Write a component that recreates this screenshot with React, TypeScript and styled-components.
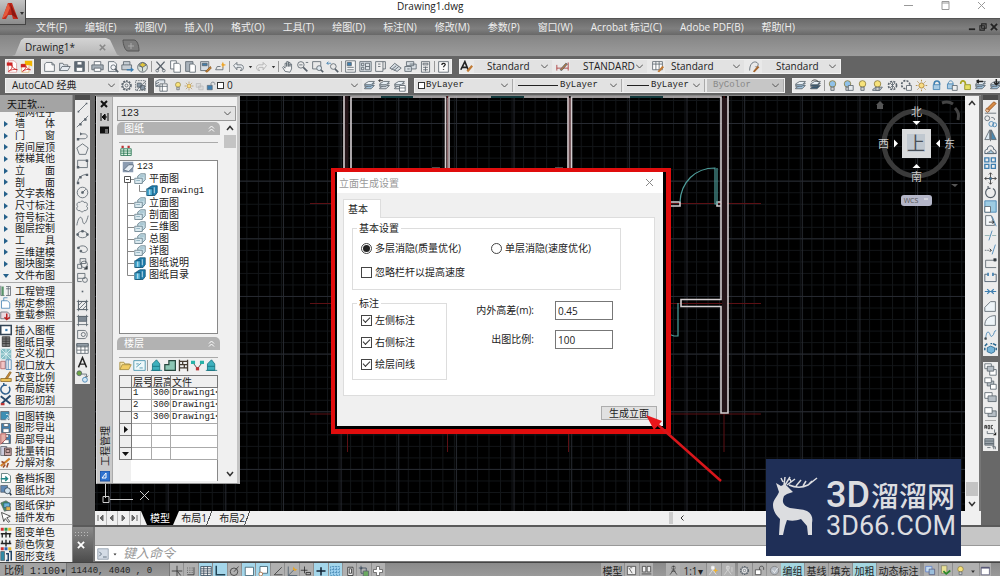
import React from 'react';
import styled, { createGlobalStyle, css } from 'styled-components';

const ui = '"Open Sans", "Noto Sans CJK SC", sans-serif';
const mono = '"Liberation Mono", "Noto Sans CJK SC", monospace';

const Global = createGlobalStyle`
  *, *::before, *::after { box-sizing: border-box; }
  body { margin: 0; background: #666; font: 10px/12px ${ui}; color: #222; overflow: hidden; }
  button, input, select { font: inherit; color: inherit; margin: 0; padding: 0; border: 0; border-radius: 0; background: none; }
  ul { list-style: none; margin: 0; padding: 0; }
`;

/* ---------- icons ---------- */
const B = '#3f7fb0';
const D = '#59626b';
const sheet = <path d="M3 2h7l3 3v9H3z" fill="#f4f6f8" />;
const layers = (c: string) => (
  <>
    <path d="M2 11l5-3h7l-4 4H2z" fill={c} />
    <path d="M2 8l5-3h7l-4 4H2z" fill={c} />
    <path d="M2 6l5-3h7l-4 4H2z" fill="#e8f0f6" />
  </>
);
const bulb = (c: string) => (
  <>
    <circle cx="8" cy="6" r="4" fill={c} stroke="#8a7a3a" />
    <path d="M6 10h4v4H6z" fill="#cfcfcf" />
  </>
);
const disk = <><path d="M2 2h11l1 1v11H2z" fill={B} /><path d="M5 2h6v4H5zM4 9h8v5H4z" fill="#fff" /></>;

const glyphs: Record<string, React.ReactNode> = {
  pdf: <><path d="M3 1h7l3 3v11H3z" fill="#fff" stroke="#d99" /><path d="M1 3h7v4H1z" fill="#c22" stroke="none" /><path d="M3 14c4-2 5-5 4-8 1 4 3 5 7 6-4-1-8 0-11 2z" stroke="#c22" /></>,
  pdf2: <><path d="M2 5h9v10H2z" fill="#fff" stroke="#e0b070" /><path d="M6 1l9 0 0 7-4-2-5 1z" fill="#f2b400" stroke="none" /><path d="M1 5h6v4H1z" fill="#c22" stroke="none" /><path d="M3 14c3-2 5-4 4-7 1 3 3 4 6 5-4-1-7 0-10 2z" stroke="#c22" /></>,
  new: <path d="M2 5l2-2h7l3 3v8H2zM11 3v3h3" fill="#f8f8f8" />,
  open: <path d="M2 13V4h4l1 2h5v2M2 13l3-5h10l-3 5z" fill="#e4eaf0" />,
  save: <><path d="M2 2h12v12H2z" fill="#5f6a75" /><path d="M5 2h6v4H5zM4 9h8v5H4z" fill="#fff" /></>,
  print: <><path d="M4 6V2h8v4" fill="#fff" /><path d="M1 6h14v6H1z" fill="#a7b0b8" /><path d="M4 10h8v4H4z" fill="#fff" /></>,
  preview: <>{sheet}<circle cx="9" cy="9" r="3" /><path d="M11 11l4 4" strokeWidth="2" /></>,
  plot: <><path d="M3 6V2h8v4M1 6h12v6H1z" fill="#c7ced4" /><path d="M7 11h5V9l4 3-4 3v-2H7z" fill={B} stroke="none" /></>,
  pubs: <><circle cx="8" cy="9" r="6" fill="#d9e2dc" /><path d="M8 3l5 3-5 3-4-3z" fill="#e0c63a" /><path d="M8 9v5M3 7l5 2" /></>,
  cut: <><path d="M3 2l9 10M13 2L4 12" strokeWidth="1.600" /><circle cx="4" cy="13" r="1.700" /><circle cx="12" cy="13" r="1.700" /></>,
  copy: <><path d="M2 1h7v10H2z" fill="#fff" /><path d="M6 4h6l2 2v9H6z" fill="#fff" /></>,
  paste: <><path d="M2 2h9v12H2z" fill="#aab3bb" /><path d="M7 5h5l2 2v8H7z" fill="#fff" /></>,
  match: <><path d="M2 2h10v11H2z" fill="#d6dde4" /><path d="M4 4h6v3H4z" fill={B} /><path d="M8 14l6-6 1 2-5 5z" fill="#c98435" stroke="#8d5a20" /></>,
  edit: <><path d="M2 12h9V8M2 12l2-4h4" /><path d="M9 6l2-4 1 3 3 1-3 1-1 3-1-3z" fill="#eda52a" stroke="none" /></>,
  undo: <path d="M2 7l4-4v3h5c4 0 4 7 0 7h-1c3-2 2-4 0-4H6v3z" fill="#eef1f4" />,
  redo: <path d="M14 7l-4-4v3H5c-4 0-4 7 0 7h1C3 11 4 9 6 9h4v3z" fill="#eee" stroke="#aaa" />,
  down: <path d="M5 7h6l-3 4z" fill="#333" stroke="none" />,
  pan: <path d="M5 14L2 9l1-1 2 2V4h2v4-6h2v6-5h2v5-3h2v6l-2 4z" fill="#f3f3f3" />,
  zoomrt: <><circle cx="6" cy="6" r="4" /><path d="M9 9l5 5" strokeWidth="2" /><path d="M4 6h4M12 3h3" /></>,
  zoomwin: <><path d="M2 2h10v9H2z" /><circle cx="10" cy="10" r="3" fill="#dfe8ef" /><path d="M12 12l3 3" strokeWidth="2" /></>,
  zoomprev: <><circle cx="9" cy="8" r="3.500" /><path d="M11 11l4 4" strokeWidth="2" /><path d="M1 4h5M1 4l2-2M1 4l2 2" stroke={B} /></>,
  props: <><path d="M2 1h12v14H2z" fill="#f6f6f6" /><path d="M4 3h5v4H4z" fill={B} /><path d="M4 9h8M4 12h8" /></>,
  center: <><path d="M1 2h14v12H1z" fill="#dde3e8" /><path d="M3 4h3v3H3zM3 9h3v3H3zM8 4h5v8H8zM8 8h5" /></>,
  palette: <><path d="M2 2h9v12H2z" fill="#eee" /><path d="M11 2h3v9h-3" /><path d="M5 5h3M5 8h3" /></>,
  sheetset: <path d="M1 10l6-6 8 6-5 4zM3 12l6-5M6 13l6-5" fill="#d4dbe1" />,
  markup: <path d="M3 2h9v5H3zM1 8h8v6H1zM7 5h8v6H9M4 11h3" fill="#d9dfe4" />,
  calc: <><path d="M3 2h10v13H3z" fill="#eee" /><path d="M5 4h6v2H5zM5 9h6M5 12h6M8 8v6" /></>,
  help: <><path d="M2 2h12v13H2z" fill="#fafafa" /><path d="M6 6c0-3 5-2 4 0-1 1-2 2-2 3M8 11v1" stroke="#222" strokeWidth="1.600" /></>,
  textstyle: <><path d="M1 12L6 2l4 10M3 9h6" stroke="#222" strokeWidth="2" /><path d="M8 13l6-7 2 2-6 7z" fill="#c07a35" stroke="none" /></>,
  dimstyle: <><path d="M1 13V6M15 13V3M1 10h14" stroke="#a33" /><path d="M5 12l7-8 2 1-7 8z" fill="#b9793f" /></>,
  tablestyle: <><path d="M2 2h12v10H2zM2 5h12M6 2v10M10 2v10" fill="#fff" /><path d="M8 14l6-7 2 2-6 6z" fill="#c07a35" stroke="none" /></>,
  leader: <><path d="M2 13c0-9 5-12 9-10 4 3-1 7-2 5" /><path d="M6 14l6-7 2 2-6 6z" fill="#a4642d" stroke="none" /></>,
  gear: <><circle cx="8" cy="8" r="5" strokeDasharray="2 1.200" strokeWidth="3" /><circle cx="8" cy="8" r="4.600" fill="#eee" /><circle cx="8" cy="8" r="1.800" /></>,
  wsp: <><path d="M2 2h12v12H2z" strokeDasharray="2 1" /><path d="M4 5h5v5H4zM8 8h5v5H8z" fill="#8a98a5" /><path d="M3 14L14 3" /></>,
  layerprops: <><path d="M1 3l4-2h7v4M1 6l4-2M1 9l4-2M1 3v6h5" fill="#dce3ea" /><path d="M6 6h9v9H6zM6 9h9M9 6v9" fill="#fff" /></>,
  bulbY: bulb('#f7e27a'),
  bulbB: bulb('#8fc1e8'),
  bulbS: <>{bulb('#8fc1e8')}<path d="M9 8h6v6H9z" fill="#e4e9ed" /></>,
  bulbL: <><path d="M2 13l4-3h8l-3 4H2z" fill="#b7c4cf" />{bulb('#f7e27a')}</>,
  sun: <><circle cx="8" cy="8" r="3.200" fill="#f9dd84" stroke="#a77d30" /><path d="M8 1v2M8 13v2M1 8h2M13 8h2M3 3l1.500 1.500M11.500 11.500L13 13M13 3l-1.500 1.500M3 13l1.500-1.500" stroke="#a77d30" /></>,
  vpfreeze: <path d="M2 4h7v6H2zM6 8h7v6H6z" fill="#dadada" stroke="#b5b5b5" />,
  lock: <><path d="M2 7h8v7H2z" fill={B} /><path d="M8 7V4c0-3 6-3 6 0v2" /></>,
  layB: layers('#9fc0da'),
  layBack: <>{layers('#cfd6dc')}<path d="M1 2h5M1 2l2-2M1 2l2 2" stroke="#222" /></>,
  layState: <>{layers('#e2e6ea')}<path d="M8 8h7v7H8zM8 11h7" fill="#fff" /></>,
  layDark: <>{layers('#35566f')}<path d="M3 3c3-3 7-2 9 1" stroke="#222" /></>,
  layArrow: <>{layers('#9fc0da')}<path d="M3 3h8M3 3l3-2M3 3l3 2" stroke="#222" strokeWidth="1.800" /></>,
  layDown: <>{layers('#9fc0da')}<path d="M9 0v6M6 4l3 3 3-3" stroke="#222" strokeWidth="1.800" /></>,
  snow: <><circle cx="8" cy="8" r="5" strokeDasharray="2.500 1.500" strokeWidth="2" /><path d="M5 5l6 6M11 5l-6 6M8 4v8" /></>,
  snow2: <><circle cx="7" cy="7" r="5" strokeDasharray="2.500 1.500" strokeWidth="2" /><path d="M8 8h6v6H8z" fill="#f1f1f1" /></>,
  lockB: <><path d="M4 7h8v6H4z" fill="#a9cbe4" stroke={B} /><path d="M5 7c0-6 7-6 7 0" stroke={B} strokeWidth="2" /></>,
  lockS: <><path d="M3 6h7v6H3z" fill="#a9cbe4" stroke={B} /><path d="M4 6c0-5 6-5 6 0" stroke={B} /><path d="M9 8h6v6H9z" fill="#eee" /></>,
  lockY: <><path d="M7 7h7v6H7z" fill="#e6df63" stroke="#8d8c20" /><path d="M2 6c0-5 6-5 6 1" stroke="#a9a420" strokeWidth="2" /></>,

  line: <><path d="M3 13L13 3" /><path d="M2 12h2v2H2zM12 2h2v2h-2z" fill={D} stroke="none" /></>,
  xline: <><path d="M1 15L15 1" /><path d="M4 10h3v3H4zM10 4h3v3h-3z" fill={D} stroke="none" /></>,
  pline: <><path d="M3 12h7c5 0 5-6 0-6H7" /><path d="M1 11h3v3H1zM5 4l3 2-3 2z" fill={D} stroke="none" /></>,
  polygon: <path d="M8 1l7 5-3 8H4L1 6z" />,
  rect: <><path d="M2 4h12v9H2z" /><path d="M1 11h3v3H1zM12 3h3v3h-3z" fill={D} stroke="none" /></>,
  arc: <><path d="M2 14C2 8 6 3 14 3" /><path d="M1 12h3v3H1zM12 2h3v3h-3zM4 5h3v3H4z" fill={D} stroke="none" /></>,
  circle: <><circle cx="8" cy="8" r="6.500" /><path d="M8 8l4-4" /><path d="M7 7h2v2H7z" fill={D} /></>,
  cloud: <path d="M5 3c2-3 5-1 5 0 4-1 5 3 3 5 3 2 0 6-3 5-2 3-5 1-5 0-4 1-5-3-3-5-2-3 0-6 3-5z" />,
  spline: <path d="M1 14C3 2 7 2 8 8s4 6 7-6" />,
  ellipse: <><ellipse cx="8" cy="8" rx="6" ry="4" /><path d="M1 7h2v2H1zM13 7h2v2h-2zM7 3h2v2H7z" fill={D} /></>,
  earc: <><path d="M3 6c2-4 11-3 11 2 0 4-7 5-8 2" /><path d="M2 5h2v2H2zM5 9h2v2H5z" fill={D} /></>,
  insblock: <><path d="M5 2h7v6H5zM2 9h5v5H2z" /><circle cx="10" cy="9" r="4" /><path d="M14 15v-4l-4 4z" fill="#222" /></>,
  mkblock: <><path d="M2 3h9v6H2z" /><circle cx="11" cy="11" r="3" /><path d="M2 9v4h5" /></>,
  point: <path d="M7 7h2v2H7z" fill={D} stroke="none" />,
  hatch: <><path d="M3 3h10v10H3zM1 3h14M1 13h14M3 1v14M13 1v14" /><path d="M3 8l5-5M3 13L13 3M8 13l5-5" /></>,
  gradient: <><path d="M1 3h14M1 13h14M3 1v14M13 1v14" /><path d="M3 3h10v6H3z" fill="#7f8a94" /></>,
  region: <><path d="M2 13V3h8c5 0 5 10 0 10z" /><circle cx="9" cy="8" r="2.500" /></>,
  table: <><path d="M1 2h14v12H1zM1 6h14M1 10h14M6 2v12M11 2v12" fill="#fff" /><path d="M1 2h14v3H1z" fill="#9aa5ae" /></>,
  text: <path d="M3 14L8 2l5 12M5 10h6" stroke="#222" strokeWidth="1.800" />,
  addsel: <><circle cx="4" cy="4" r="3" fill="#6da544" /><path d="M7 5h6v4M11 7l2 2 2-2" /><circle cx="11" cy="12" r="3" fill="#cfe4f3" stroke={B} /></>,

  erase: <><path d="M4 9l8-8 3 2-8 8z" fill="#d78b45" stroke="#925120" /><path d="M3 9l4 3-3 2-2-2z" fill="#f3c9a8" stroke="#925120" /><path d="M1 15h14" /></>,
  copy2: <><circle cx="4" cy="4" r="3" /><circle cx="9" cy="11" r="3" stroke={B} /><circle cx="13" cy="12" r="2.500" stroke={B} /><path d="M9 3c3 0 4 1 4 3" /></>,
  mirror: <><path d="M7 1v12H1z" fill="#dbe8f1" /><path d="M9 1v12h6z" fill="#4b88b0" /><path d="M8 1v14" /></>,
  offset: <><path d="M1 13c0-5 1-5 3-5 0-6 8-6 8 0 2 0 3 1 3 5z" stroke="#345" /><path d="M4 13c0-2 1-2 3-2 0-3 3-3 3 0 2 0 2 0 2 2z" fill="#a8cbe0" /></>,
  array: <path d="M1 1h5v5H1zM9 1h5v5H9zM1 9h5v5H1zM9 9h5v5H9z" stroke={B} strokeWidth="1.600" />,
  move: <><path d="M8 1v14M1 8h14M6 3l2-2 2 2M6 13l2 2 2-2M3 6L1 8l2 2M13 6l2 2-2 2" stroke="#333" /><circle cx="8" cy="8" r="1.500" fill={B} /></>,
  rotate: <path d="M5 3a6 6 0 1 0 6 0M5 3V0M5 3h3" strokeWidth="1.500" />,
  scale: <><path d="M1 1h14v14H1z" fill="#9dcbe2" stroke={B} /><path d="M1 8h7v7H1z" fill="#fff" /></>,
  stretch: <><path d="M2 2h7l4 12H2z" fill="#f4f8fb" /><path d="M10 3l5 12" stroke={B} /><path d="M6 10h6M10 8l2 2-2 2" stroke="#222" /></>,
  trim: <><path d="M1 8h6M10 8h5" stroke="#8aa" /><path d="M6 14l4-12" stroke={B} /></>,
  extend: <><path d="M1 9h8" strokeDasharray="2 1" /><path d="M10 14l4-12" stroke={B} /><path d="M7 7l2 2-2 2" stroke="#222" /></>,
  breakpt: <><path d="M14 4H2v9h13" /><path d="M12 2h3v3h-3z" fill="#222" /></>,
  brk: <><path d="M5 4H1v9h14V4h-4" stroke="#456" /><path d="M5 2v4M11 2v4" stroke={B} strokeWidth="2" /></>,
  join: <path d="M1 8h14M4 5l3 3-3 3M12 5L9 8l3 3" stroke={B} strokeWidth="1.500" />,
  chamfer: <path d="M1 14V9l7-7h6v12z" fill="#eef4f8" />,
  fillet: <path d="M1 14c0-7 4-12 13-12v12z" fill="#eef4f8" />,
  blend: <><path d="M1 13c2 0 1-8 4-8s2 7 5 5 2-7 5-7" stroke={B} /><path d="M1 12h2v2H1z" fill="#333" /></>,
  explode: <><path d="M4 7l4-2 5 2v5l-4 2-5-2z" fill="#76b4d8" stroke="#25648c" /><path d="M1 5l3-3M1 10V7M11 2l4 2M8 2h2M15 7v3" stroke="#25648c" strokeWidth="1.800" /></>,
  order1: <><path d="M1 1h8v6H1zM7 8h8v7H7z" fill="#fff" /><path d="M4 4h8v6H4z" fill="#b6bec5" /></>,
  order2: <><path d="M4 5h8v6H4z" fill="#b6bec5" /><path d="M1 1h8v6H1zM8 9h7v6H8z" fill="#fff" /></>,
  order3: <><path d="M1 2h9v7H1z" fill="#fff" /><path d="M5 6h10v7H5z" fill="#b6bec5" /></>,
  order4: <><path d="M5 6h10v7H5z" fill="#b6bec5" /><path d="M1 2h9v7H1z" fill="#fff" /></>,
  abc: <><path d="M1 7V3h2v4M1 5h2M5 3v4h2V3H5M11 3H9v4h2" stroke="#222" /><path d="M4 10v3h8M13 8v4" /><path d="M15 15v-4l-4 4z" fill="#222" stroke="none" /></>,
  hatchback: <><path d="M1 2h11v8H1zM1 5h11M1 8h11" fill="#9ba4ab" /><path d="M4 13h4M10 12h4v3M12 10v5" /></>,

  ty1: <><path d="M1 1v13h5M8 2h6v12H8M8 5h6M11 2v12" /><path d="M2 2h3v12H2z" fill="#59936a" stroke="none" /></>,
  ty2: <><path d="M2 5h8l3 3v7H2z" fill="#fff" stroke={B} /><path d="M5 5V1h5" stroke={B} /></>,
  ty3: <><path d="M1 4h9l3 3v6H1z" fill="#ecd9df" /><path d="M9 6v8M6 11l3 3 4-3" stroke="#b22" strokeWidth="2" /></>,
  ty4: <><path d="M1 2h14v12H1z" fill="#fff" stroke="#345" strokeWidth="2" /><path d="M7 8h3" stroke={B} strokeWidth="3" /></>,
  ty5: <path d="M3 1h10v13H3zM3 4h10M3 7h10M3 10h10M8 1v13" fill="#777" stroke="#333" />,
  ty6: <><path d="M1 1h14v14H1z" fill="#86bfc6" stroke="none" /><path d="M1 1l14 14M15 1L1 15M8 1v14M1 8h14" stroke="#e6f4f5" /></>,
  ty7: <><path d="M1 3h6v10H1z" fill="#f1c5c5" stroke="#a55" /><path d="M8 1h7v13H8zM11 1v13" stroke={B} /></>,
  ty8: <><path d="M1 14h14v-4H1z" fill="#eac15a" stroke="#8a6420" /><path d="M7 10l6-9 2 1-5 8z" fill="#c98a3d" stroke="#8a6420" /></>,
  ty9: <path d="M5 3a6 6 0 1 0 7 2M5 3V0M5 3h4" stroke="#2f5f8c" strokeWidth="2" />,
  ty10: <><path d="M1 3l13 10M2 13L14 2" stroke="#27496b" strokeWidth="2.500" /><path d="M1 12h5v3H1z" fill="#b33" stroke="none" /></>,
  ty11: <><path d="M1 2h11v11H1z" fill="#3d8fb4" /><path d="M8 6c6-1 6 6 1 7M11 9l-3 4 4 2" stroke="#fff" /></>,
  ty12: disk,
  ty13: <>{disk}<path d="M1 1h7v7l-7 7z" fill="#e3b0a8" stroke="#a44" /></>,
  ty14: <><path d="M1 2h8v12H1z" fill="#ccd" /><path d="M6 4h9v10H6zM8 6h5v4H8z" fill="#c9a7a7" stroke="#433" /></>,
  ty15: <><path d="M1 12l12-10" stroke="#d2822c" strokeWidth="3" /><path d="M4 14l3-4M9 14l2-6M2 6l4 2" stroke="#9a4a2a" strokeWidth="2" /></>,
  ty16: <><path d="M2 2h8l4 3v9H2z" fill="#fff" stroke="#466" /><path d="M1 9h9M7 6l3 3-3 3" stroke="#288" strokeWidth="2" /></>,
  ty17: <><path d="M1 2h9v9H1z" fill="#5f88b5" /><circle cx="10" cy="9" r="4" fill="#d3e4f0" stroke="#234" /><path d="M13 12l2 3" stroke="#234" strokeWidth="2" /></>,
  ty18: <><path d="M1 4l7-3 6 4-2 8-6 2z" fill="#49925a" /><path d="M5 4h8v6H5z" fill="#6bb3d8" stroke="#2a5f80" /><path d="M8 9h6v5H8z" fill="#e2b44b" /></>,
  ty19: <path d="M2 2l12 5-5 2 4 5-2 1-4-5-2 4z" fill="#fff" stroke="#222" />,
  ty20: <><path d="M1 1h4v4H1z" fill="#c33" stroke="none" /><path d="M6 1h4v4H6z" fill="#2b9347" stroke="none" /><path d="M11 1h4v4h-4z" fill="#e2b32b" stroke="none" /><path d="M1 9h14M3 9v5M8 6v8M13 9v5" stroke="#222" strokeWidth="1.800" /></>,
  ty21: <><path d="M1 11h4v4H1z" fill="#c33" stroke="none" /><path d="M6 11h4v4H6z" fill="#2b62b3" stroke="none" /><path d="M11 11h4v4h-4z" fill="#e2b32b" stroke="none" /><path d="M1 6h14M3 2v5M8 1v9M13 2v5" stroke="#222" strokeWidth="1.800" /></>,
  ty22: <><path d="M1 2h5v12H1z" fill="#2f8aa5" /><path d="M8 5h3v9H8M12 2h3v12" stroke="#246" strokeWidth="2" /></>,

  grid: <><path d="M1 5h14v9H1zM1 8h14M1 11h14M5 5v9M10 5v9" fill="#dff3e6" stroke="#1d6e4a" /><path d="M2 1h3v3H2zM10 1h3v3h-3z" fill="#b33" stroke="none" /></>,
  server: <><path d="M1 1h14v14H1z" fill="#8b9bb0" stroke="none" /><path d="M2 12L9 5h6v3l-6 6z" fill="#e4ebf2" stroke="#4c5d72" /></>,
  book: <><path d="M5 4l4-3h6v8l-4 4H5z" fill="#c5dde6" stroke="#5c7683" /><path d="M1 7h10v7H1z" fill="#dceaf0" stroke="#5c7683" /><path d="M3 10h5M8 4h5" stroke="#7fa6b5" /></>,
  bookB: <><path d="M3 4l5-3h7v9l-3 4H3z" fill="#1f7fae" stroke="#134d6d" /><path d="M1 5h8v9H1z" fill="#46a8cf" stroke="#134d6d" /><path d="M5 6v7M11 3v8" stroke="#fff" /></>,
  folder: <><path d="M1 13V4h5l1 2h6v2" fill="#f5e2a2" stroke="#a38a3c" /><path d="M1 13l3-6h11l-3 6z" fill="#f0cc63" stroke="#a38a3c" /></>,
  sheetE: <><path d="M1 2h14v12H1z" fill="#eef8fa" stroke="#3d8ca8" /><path d="M4 10l6-5M4 6h3M8 11h4" stroke="#3d8ca8" /></>,
  tower: <path d="M8 1l4 5v8H3V6zM3 9h9M1 14h14" fill="#3db0bd" stroke="#14717e" />,
  bldg: <path d="M1 14V7h5V2h8v12z" fill="#8cc6b4" stroke="#27493f" strokeWidth="1.500" />,
  brick: <path d="M3 1v14M13 1v14M3 3h10M3 7h10M3 11h10M7 3v4M9 7v4" stroke="#443a30" strokeWidth="1.600" />,
  nodes: <><path d="M2 4l6 8 6-8" stroke="#333" /><path d="M0 2h5v4H0zM11 2h5v4h-5z" fill="#29b2a8" stroke="none" /><path d="M6 10h4v4H6z" fill="#b33" stroke="none" /></>,

  cursor: <path d="M8 1v14M1 8h14M9 9l4 5" stroke="#222" />,
  snapg: <><path d="M12 3v10H3" stroke="#333" /><path d="M3 4h1M6 4h1M9 4h1M3 7h1M6 7h1M9 7h1M3 10h1M6 10h1M9 10h1" stroke="#333" /></>,
  gridg: <path d="M1 2h14v12H1zM1 5h14M1 8h14M1 11h14M5 2v12M10 2v12" fill="#eee" stroke="#345" />,
  ortho: <path d="M3 1v12h12" stroke="#245" strokeWidth="2" />,
  polar: <><circle cx="8" cy="9" r="5" stroke="#333" /><path d="M8 9l6-7" stroke="#333" /></>,
  osnap: <path d="M3 3h11v11H3z" fill="#fff" stroke="#356" />,
  osnap3: <><path d="M4 2h10v9H4z" fill="#fff" stroke="#356" /><circle cx="5" cy="12" r="2.500" fill="#fff" stroke="#a63" /></>,
  angle: <path d="M13 3L3 13h11" stroke="#333" />,
  ducs: <><path d="M3 2v12h12M3 14l8-8" stroke="#456" /><path d="M10 2l2 3 3 1-3 2-3-2z" fill="#e6a52b" stroke="none" /></>,
  dyn: <path d="M1 7h9M6 2v9M8 10h6v3H8z" stroke="#222" />,
  lwt: <path d="M2 8h12M8 3v11" stroke="#123" strokeWidth="2" />,
  transp: <path d="M2 2h12v12H2zM2 6h12M2 10h12M6 2v12M10 2v12" fill="#9cd0ee" stroke="#2d73a2" strokeDasharray="1 1" />,
  qp: <path d="M5 3h7v11H5zM7 5h3v6H7z" stroke="#222" fill="#eee" />,
  cycle: <><path d="M4 4h7v7H4zM1 4h5M4 1v5" stroke="#345" /><path d="M7 8h7v7H7z" fill="#6aa860" /></>,
  plus: <path d="M6 2h4v4h4v4h-4v4H6v-4H2V6h4z" fill="#fff" stroke="#555" />,
  model: <><path d="M2 2h12v12H2z" fill="#eee" stroke="#333" /><path d="M4 4l5 8M6 4h3" stroke="#333" /></>,
  layout: <><path d="M2 2h5v8H2zM9 2h5v8H9z" fill="#eee" stroke="#333" /><path d="M1 13h14" stroke="#333" /></>,
  person: <path d="M8 1v6M8 7l-5 7M8 7l5 7M5 9h6M6 2h4v4H6z" stroke="#333" fill="#fff" />,
  personY: <><path d="M7 1v6M7 7l-5 7M7 7l5 7M5 2h4v4H5z" stroke="#eee" fill="#fff" /><path d="M11 4l1 3 3 1-3 1-1 3-1-3-3-1 3-1z" fill="#efb22e" stroke="none" /></>,
  personG: <path d="M7 1v6M7 7l-5 7M7 7l5 7M5 2h4v4H5zM13 3v7" stroke="#ddd" />,
  unlock: <><path d="M2 7h8v7H2z" fill="#fff" stroke="#333" /><path d="M8 7V4c0-3 6-3 6 0v3" stroke="#333" /></>,
  shield: <><circle cx="8" cy="8" r="6" fill="#b8bec6" stroke="#777" /><path d="M5 7l3 4 5-7" stroke="#fff" /></>,
  tray1: <><path d="M1 2h9v8H1z" fill="#c4dcf0" stroke="#57c" /><path d="M6 6h8v8H6z" fill="#9bbfdc" stroke="#557" /></>,
  tray2: <><path d="M2 1h8v11H2z" fill="#e8e095" stroke="#776" /><path d="M5 9l4 4 6-5" stroke="#2a8a2a" strokeWidth="2.500" /></>,
  clean: <><path d="M2 2h13v12H2z" fill="#fff" stroke="#446" /><path d="M2 2h13v2H2z" fill="#446" stroke="none" /></>,
  prompt: <><path d="M1 1h14v14H1z" fill="#d4dce6" stroke="#8694a4" /><path d="M3 5l3 3-3 3M8 12h5" stroke="#456" /></>,
};

const Svg = styled.svg<{ $s: number }>`
  display: block;
  flex: none;
  width: ${p => p.$s}px;
  height: ${p => p.$s}px;
  fill: none;
  stroke: ${D};
`;
const Icon = ({ n, s = 13 }: { n: string; s?: number }) => (
  <Svg $s={s} viewBox="0 0 16 16" aria-hidden="true">{glyphs[n]}</Svg>
);
const Chevron = styled.svg`
  width: 7px;
  height: 5px;
  flex: none;
  fill: none;
  stroke: #555;
`;
const Chev = () => <Chevron viewBox="0 0 7 5"><path d="M0 .5l3.500 3.500L7 .5" /></Chevron>;

/* ---------- shell ---------- */
const Page = styled.div`
  position: relative;
  display: flex;
  flex-direction: column;
  min-height: 100vh;
`;
const TitleBar = styled.header`
  height: 18px;
  background: #fff;
  display: flex;
  justify-content: flex-end;
`;
const Title = styled.h1`
  flex: 1;
  margin: 0;
  padding-left: 397px;
  font: 10px/13px ${ui};
  color: #222;
`;
const WinButtons = styled.div`
  display: flex;
  width: 114px;
  justify-content: space-between;
  padding: 0 14px 7px 18px;
`;
const WinButton = styled.button`
  width: 9px;
  height: 11px;
  svg { display: block; width: 9px; height: 9px; fill: none; stroke: #999; }
`;
const AppButton = styled.button`
  position: absolute;
  z-index: 2;
  left: 0;
  top: 0;
  width: 26px;
  height: 25px;
  background: linear-gradient(#c4c4c4, #8c8c8c);
  border: solid #444;
  border-width: 0 1px 1px 0;
  svg { display: block; width: 25px; height: 20px; }
`;
const MenuBar = styled.nav`
  height: 17px;
  display: flex;
  gap: 18px;
  padding-left: 36px;
  background: linear-gradient(#6a6a6a, #7f7f7f 60%, #686868);
  border-top: 1px solid #555;
  color: #eee;
`;
const MenuItem = styled.button`
  white-space: nowrap;
  line-height: 16px;
  font-size: 10px;
`;
const DocButtons = styled.div`
  margin-left: auto;
  display: flex;
  align-items: center;
  gap: 3px;
  padding-right: 2px;
`;
const DocButton = styled.button`
  svg { display: block; width: 8px; height: 8px; fill: none; stroke: #222; stroke-width: 2; }
`;
const TabBar = styled.div`
  height: 22px;
  display: flex;
  align-items: flex-end;
  padding-left: 12px;
  background: linear-gradient(#858585, #9c9c9c);
  border-bottom: 1px solid #666;
`;
const FileTab = styled.button`
  position: relative;
  width: 108px;
  height: 18px;
  text-align: left;
  font-size: 10px;
  padding-left: 13px;
  clip-path: polygon(0 100%, 3px 94%, 9px 12%, 12px 0, 94px 0, 98px 10%, 105px 92%, 100% 100%);
  background: linear-gradient(#d4d4d4, #b6b6b6);
  display: flex;
  align-items: center;
  justify-content: space-between;
  padding-right: 14px;
  svg { width: 7px; height: 7px; stroke: #888; stroke-width: 2; }
`;
const NewTab = styled.button`
  width: 18px;
  height: 13px;
  margin: 0 0 4px 2px;
  svg { display: block; width: 18px; height: 13px; fill: #7c7c7c; stroke: #555; }
`;

/* ---------- toolbars ---------- */
const ToolRow = styled.div`
  height: 19px;
  display: flex;
  align-items: center;
  background: #646464;
  overflow: hidden;
`;
const Band = styled.div<{ $w?: number; $ml?: number }>`
  display: flex;
  align-items: center;
  height: 15px;
  margin-left: ${p => p.$ml ?? 7}px;
  ${p => p.$w ? css`flex: 0 0 ${p.$w}px;` : css`flex: 1 0 auto;`}
  background: #e9e9e9;
  border: 1px solid #f2f2f2;
`;
const Tool = styled.button<{ $lit?: boolean }>`
  flex: 1 1 0;
  min-width: 0;
  min-height: 0;
  display: flex;
  align-items: center;
  justify-content: center;
  background: ${p => p.$lit ? '#a9d5e6' : 'none'};
`;
const Sep = styled.span`
  flex: none;
  width: 1px;
  height: 11px;
  margin: 0 1px;
  background: #999;
`;
const SmallTool = styled(Tool)`
  flex: 0 0 8px;
`;
const ComboBox = styled.label<{ $w?: number; $off?: boolean }>`
  position: relative;
  display: flex;
  align-items: center;
  gap: 1px;
  ${p => p.$w ? css`flex: 0 0 ${p.$w}px;` : css`flex: 1;`}
  min-width: 0;
  height: 13px;
  padding: 0 4px 0 3px;
  background: ${p => p.$off ? '#c6c6c6' : '#e2e2e2'};
  color: ${p => p.$off ? '#888' : '#222'};
  select {
    appearance: none;
    flex: 1 1 0;
    min-width: 0;
    height: 13px;
    line-height: 13px;
    font-size: 10px;
    opacity: 1;
  }
`;
const MonoCombo = styled(ComboBox)`
  border-right: 1px solid #aaa;
  select { font: 9px/13px ${mono}; color: inherit; }
`;
const Swatch = styled.span`
  flex: none;
  width: 7px;
  height: 7px;
  border: 1px solid #333;
  background: #fff;
`;
const LineSample = styled.span<{ $w: number }>`
  flex: 0 0 ${p => p.$w}px;
  height: 1px;
  margin-right: 1px;
  background: #222;
`;
const Indent = styled.span<{ $w: number }>`
  flex: 0 0 ${p => p.$w}px;
`;

const Tools = ({ list }: { list: string }) => (
  <>
    {list.split(' ').map((n, i) =>
      n === '|' ? <Sep key={i} /> : n === 'down'
        ? <SmallTool key={i} aria-label="down"><Icon n="down" s={9} /></SmallTool>
        : <Tool key={i} aria-label={n}><Icon n={n} /></Tool>)}
  </>
);
const Choice = ({ label, text }: { label: string; text: string }) => (
  <select aria-label={label} defaultValue={text}><option>{text}</option></select>
);

/* ---------- left menu ---------- */
const Body = styled.div`
  flex: 1;
  display: flex;
  min-height: 0;
`;
const Side = styled.aside`
  flex: 0 0 73px;
  display: flex;
  flex-direction: column;
  background: #f1f1f1;
  border-right: 1px solid #888;
`;
const SideTitle = styled.h2`
  margin: 0;
  height: 17px;
  padding-left: 7px;
  font: 10px/18px ${ui};
  background: #a4a4a4;
  color: #111;
`;
const Clipped = styled.div`
  height: 6px;
  overflow: hidden;
  display: flex;
  flex-direction: column;
  justify-content: flex-end;
  padding-left: 15px;
`;
const SideGroup = styled.ul<{ $n: number }>`
  flex: ${p => p.$n} 1 0;
  display: flex;
  flex-direction: column;
`;
const SideRow = styled.li`
  flex: 1 1 0;
  display: flex;
  min-height: 11px;
`;
const SideButton = styled.button`
  flex: 1;
  display: grid;
  grid-template-columns: 13px 40px;
  column-gap: 2px;
  align-items: center;
  line-height: 11px;
  white-space: nowrap;
  text-align: left;
`;
const Spread = styled.span`
  display: flex;
  justify-content: space-between;
`;
const Tri = styled.span<{ $open?: boolean }>`
  justify-self: center;
  margin-right: 1px;
  border: 3px solid transparent;
  ${p => p.$open
    ? css`border-top: 4px solid #25608a; border-bottom-width: 0;`
    : css`border-left: 4px solid #25608a; border-right-width: 0;`}
`;
const Rule = styled.hr`
  flex: none;
  width: 100%;
  height: 1px;
  margin: 1px 0 2px;
  border: 0;
  background: #aaa;
`;

const plain = ['墙 体', '门 窗', '房间屋顶', '楼梯其他', '立 面', '剖 面', '文字表格', '尺寸标注', '符号标注', '图层控制', '工 具', '三维建模', '图块图案', '文件布图'];
const groups = [
  ['工程管理', '绑定参照', '重载参照'],
  ['插入图框', '图纸目录', '定义视口', '视口放大', '改变比例', '布局旋转', '图形切割'],
  ['旧图转换', '图形导出', '局部导出', '批量转旧', '分解对象'],
  ['备档拆图', '图纸比对'],
  ['图纸保护', '插件发布'],
  ['图变单色', '颜色恢复', '图形变线'],
];

/* ---------- centre ---------- */
const Centre = styled.div`
  flex: 1;
  min-width: 0;
  display: flex;
  flex-direction: column;
`;
const WorkRow = styled.div`
  flex: 1;
  min-height: 0;
  display: flex;
`;
const DockColumn = styled.div<{ $w: number; $pr: number }>`
  flex: 0 0 ${p => p.$w}px;
  padding: 0 ${p => p.$pr}px 0 2px;
  background: #686868;
`;
const Dock = styled.div<{ $h: number; $gap?: boolean }>`
  height: ${p => p.$h}px;
  margin-bottom: 6px;
  display: flex;
  flex-direction: column;
  background: #ececec;
  border-top: ${p => p.$gap ? 0 : 5}px solid #4c4c4c;
`;
const DockRule = styled.span`
  height: 1px;
  margin: 1px 2px;
  background: #aaa;
`;
const Workspace = styled.div`
  flex: 1;
  min-width: 0;
  display: flex;
  flex-direction: column;
`;
const View = styled.div`
  flex: 1;
  display: flex;
  min-height: 0;
  border-top: 1px solid #888;
`;
const Canvas = styled.main`
  position: relative;
  flex: 1;
  background: #000;
  overflow: hidden;
`;
const Drawing = styled.svg`
  position: absolute;
  inset: 0;
  width: 100%;
  height: 100%;
  fill: none;
`;
const VScroll = styled.div`
  flex: 0 0 16px;
  display: flex;
  flex-direction: column;
  align-items: center;
  background: #f0f0f0;
  border-right: 2px solid #777;
  padding: 4px 0;
`;
const Arrow = styled.svg<{ $dir?: string }>`
  flex: none;
  width: 8px;
  height: 6px;
  fill: none;
  stroke: #333;
  stroke-width: 1.5;
  transform: rotate(${p => p.$dir === 'down' ? 180 : 0}deg);
`;
const Thumb = styled.span<{ $h: number; $low?: boolean }>`
  width: 12px;
  height: ${p => p.$h}px;
  margin: ${p => p.$low ? 'auto 0 5px' : '4px 0 auto'};
  background: #c4c4c4;
`;
const LayoutTabs = styled.div`
  height: 14px;
  display: flex;
  background: #f0f0f0;
`;
const NavButtons = styled.div`
  display: flex;
  width: 46px;
`;
const NavButton = styled.button`
  flex: 1;
  border-right: 1px solid #bbb;
  svg { display: block; margin: auto; width: 7px; height: 8px; fill: #666; stroke: #666; }
`;
const LayoutTab = styled.button<{ $on?: boolean }>`
  width: 38px;
  line-height: 13px;
  ${p => p.$on
    ? css`margin-right: -4px; background: #000; color: #fff; clip-path: polygon(0 0, 100% 0, calc(100% - 6px) 100%, 6px 100%);`
    : css`background: linear-gradient(110deg, transparent 34px, #555 34px, #555 35px, transparent 35px);`}
`;
const HScroll = styled.div`
  flex: 0 0 312px;
  margin-left: auto;
  display: flex;
  align-items: center;
  gap: 7px;
  svg { width: 4px; height: 6px; fill: none; stroke: #333; }
`;
const Grip = styled.span`
  width: 4px;
  height: 12px;
  background: #ccc;
`;

/* ---------- project palette ---------- */
const Palette = styled.section`
  position: absolute;
  left: 1px;
  top: 0;
  width: 144px;
  height: 388px;
  display: flex;
  background: #f0f0f0;
  border: 1px solid #999;
  border-right: 3px solid #c4c4c4;
  border-left-color: #ddd;
`;
const PaletteBar = styled.div`
  flex: 0 0 15px;
  display: flex;
  flex-direction: column;
  align-items: center;
  gap: 5px;
  padding-top: 3px;
  background: #c9c9c9;
  svg { display: block; width: 9px; height: 8px; stroke: #111; fill: none; }
`;
const PaletteName = styled.span`
  margin-top: auto;
  writing-mode: vertical-rl;
  text-orientation: sideways;
  transform: rotate(180deg);
`;
const PaletteId = styled.span`
  height: 12px;
  svg { width: 10px; height: 11px; }
`;
const PaletteMain = styled.div`
  flex: 1;
  min-width: 0;
  display: flex;
  flex-direction: column;
  padding: 9px 1px 2px 4px;
  border-left: 1px solid #aaa;
`;
const PaletteCombo = styled(ComboBox)`
  flex: 0 0 15px;
  border: 1px solid #999;
  select { font: 10px/13px ${mono}; }
`;
const PaletteBody = styled.div`
  flex: 1;
  display: flex;
  gap: 3px;
  min-height: 0;
`;
const PaletteSections = styled.div`
  flex: 1;
  min-width: 0;
  display: flex;
  flex-direction: column;
`;
const SectionHead = styled.h3`
  margin: 1px 0 0;
  display: flex;
  align-items: center;
  justify-content: space-between;
  height: 13px;
  padding: 0 5px 0 7px;
  border-radius: 5px 5px 0 0;
  background: #b2b2b2;
  color: #fff;
  font: 10px/13px ${ui};
  svg { width: 7px; height: 7px; fill: none; stroke: #fff; }
`;
const SectionTools = styled.div`
  display: flex;
  align-items: center;
  margin: 7px 2px 2px;
  height: 16px;
  border-top: 1px solid #aaa;
`;
const TreeBox = styled.div`
  height: 174px;
  margin: 0 2px 2px;
  background: #fff;
  border: 1px solid #888;
`;
const Tree = styled.ul`
  height: 117px;
  display: flex;
  flex-direction: column;
  font: 10px/11px "Liberation Mono", "Noto Sans CJK SC", monospace;
`;
const TreeRow = styled.li<{ $d: number }>`
  flex: 1;
  display: flex;
  align-items: center;
  gap: 3px;
  padding-left: 2px;
  font-size: ${p => (p.$d === 1 ? 10 : 9)}px;
`;
const Branch = styled.svg<{ $w: number }>`
  flex: 0 0 ${p => p.$w}px;
  height: 12px;
  margin-right: -3px;
  fill: none;
  stroke: #888;
`;
const Floors = styled.table`
  width: 99px;
  border-collapse: collapse;
  table-layout: fixed;
  font: 9px/11px ${mono};
  td, th { height: 12px; padding: 0 0 0 1px; border: 1px solid #aaa; overflow: hidden; white-space: nowrap; font-weight: normal; text-align: left; background: #fff; }
  th { font: 10px/11px "Noto Sans CJK SC", sans-serif; }
  th, td:first-child { background: #efefef; border-color: #777; }
  td:first-child { text-align: center; padding: 0; }
  svg { display: block; width: 7px; height: 7px; margin: auto; fill: #111; }
`;
const FloorArea = styled.div`
  flex: 1;
  margin: 0 2px;
  border-right: 1px solid #888;
  background: linear-gradient(90deg, #efefef 12px, #fff 12px);
`;
const PaletteScroll = styled.div`
  flex: 0 0 13px;
  display: flex;
  flex-direction: column;
  align-items: center;
  padding: 4px 0;
`;

/* ---------- view cube ---------- */
const CubeBox = styled.div`
  position: absolute;
  right: 0;
  top: 0;
  width: 92px;
  height: 112px;
  svg { display: block; width: 92px; height: 112px; font-family: "Noto Sans CJK SC", sans-serif; }
`;

/* ---------- dialog ---------- */
const Frame = styled.div`
  position: absolute;
  left: 236px;
  top: 72px;
  background: #000;
  border: solid #e00d0d;
  border-width: 4px 5px 5px 4px;
  padding: 0 3px 3px 2px;
`;
const Dialog = styled.form`
  width: 326px;
  background: #f0f0f0;
  padding-bottom: 6px;
`;
const DialogTitle = styled.div`
  height: 21px;
  display: flex;
  align-items: center;
  justify-content: space-between;
  padding: 0 9px 0 2px;
  background: #fff;
  color: #999;
  svg { display: block; width: 9px; height: 9px; stroke: #888; }
`;
const DialogTab = styled.button`
  display: block;
  width: 38px;
  height: 19px;
  margin: 6px 0 -1px 6px;
  position: relative;
  background: #fff;
  border: 1px solid #ddd;
  border-bottom: 0;
  text-align: left;
  padding-left: 4px;
`;
const DialogPanel = styled.div`
  margin: 0 8px 0 6px;
  padding: 3px 8px 15px;
  background: #fff;
  border: 1px solid #ddd;
`;
const Fieldset = styled.fieldset<{ $w: number; $pt: number; $pb: number; $gap: number }>`
  width: ${p => p.$w}px;
  min-width: 0;
  margin: 0;
  padding: ${p => p.$pt}px 0 ${p => p.$pb}px 8px;
  border: 1px solid #ddd;
  legend { padding: 0 2px; line-height: 14px; margin-left: -4px; }
  > div + div { margin-top: ${p => p.$gap}px; }
`;
const OptionRow = styled.div`
  display: flex;
  height: 14px;
`;
const Option = styled.label<{ $w?: number }>`
  display: flex;
  align-items: center;
  gap: 3px;
  white-space: nowrap;
  ${p => p.$w && css`width: ${p.$w}px;`}
  input {
    appearance: none;
    flex: none;
    display: grid;
    place-items: center;
    width: 11px;
    height: 11px;
    border: 1px solid #444;
    background: #fff;
  }
  input[type='radio'] { border-radius: 50%; }
  input[type='radio']:checked::after { content: ''; width: 7px; height: 7px; border-radius: 50%; background: #222; }
  input[type='checkbox']:checked::after { content: ''; width: 7px; height: 4px; margin-top: -2px; border: solid #333; border-width: 0 0 1px 1px; transform: rotate(-45deg); }
`;
const LowerRow = styled.div`
  display: flex;
  margin-top: 6px;
`;
const Fields = styled.div`
  display: grid;
  grid-template-columns: 60px 58px;
  grid-auto-rows: 19px;
  gap: 10px 21px;
  margin: 5px 0 0 27px;
  align-items: center;
  justify-items: end;
  label { line-height: 19px; white-space: nowrap; }
  input { width: 58px; height: 19px; border: 1px solid #777; background: #fff; padding: 0 2px; }
`;
const Submit = styled.button`
  display: block;
  width: 56px;
  height: 14px;
  margin: 10px 6px 0 auto;
  background: #e1e1e1;
  border: 1px solid #adadad;
  line-height: 12px;
`;
const Pointer = styled.svg`
  position: absolute;
  left: 545px;
  top: 314px;
  width: 84px;
  height: 76px;
`;

/* ---------- command line and status ---------- */
const CommandRow = styled.div`
  height: 37px;
  display: flex;
  border-top: 2px solid #5a5a5a;
`;
const CommandGrip = styled.div`
  flex: 0 0 22px;
  display: flex;
  flex-direction: column;
  align-items: center;
  gap: 5px;
  padding: 4px 5px 0 0;
  background: linear-gradient(#8a8a8a, #4c4c4c);
  border-right: 2px solid #777;
  svg { width: 8px; height: 8px; stroke: #fff; stroke-width: 2; fill: none; }
`;
const Dots = styled.span`
  width: 14px;
  height: 5px;
  background: radial-gradient(#bbb 1px, transparent 1px) 0 0 / 3px 3px;
`;
const CommandMain = styled.div`
  flex: 1;
  display: flex;
  flex-direction: column;
  background: #c6c6c6;
`;
const CommandInput = styled.div`
  height: 17px;
  margin-top: auto;
  display: flex;
  align-items: center;
  gap: 2px;
  padding-left: 2px;
  background: #fff;
  border-top: 1px solid #999;
  border-bottom: 1px solid #777;
  input { flex: 1; padding-left: 2px; height: 15px; font: italic 13px/15px ${ui}; }
  input::placeholder { color: #999; opacity: 1; }
`;
const Status = styled.footer`
  height: 14px;
  display: flex;
  overflow: hidden;
  background: linear-gradient(#8a8a8a, #9a9a9a);
  border-top: 1px solid #444;
  line-height: 17px;
  white-space: nowrap;
`;
const Coords = styled.span<{ $w: number; $dark?: boolean }>`
  flex: 0 0 ${p => p.$w}px;
  padding-left: 4px;
  font: ${p => p.$dark ? 9 : 10}px/17px ${mono};
  background: ${p => p.$dark ? 'transparent' : '#a4a4a4'};
  border-right: 1px solid #777;
`;
const StatusTools = styled.div<{ $w: number }>`
  flex: 0 0 ${p => p.$w}px;
  display: flex;
  gap: 1px;
`;
const StatusTool = styled(Tool)`
  background: ${p => p.$lit ? '#a4d6ea' : '#b0b0b0'};
  svg { margin-top: 2px; }
`;
const StatusText = styled.button<{ $lit?: boolean; $w?: number }>`
  line-height: 17px;
  height: 17px;
  flex: 0 0 ${p => p.$w ?? 23}px;
  margin-right: 1px;
  background: ${p => p.$lit ? '#a4d6e0' : '#aaa'};
`;
const Filler = styled.span<{ $w?: number }>`
  ${p => p.$w ? css`flex: 0 0 ${p.$w}px;` : css`flex: 1;`}
`;

/* ---------- brand ---------- */
const Brand = styled.div`
  position: absolute;
  right: 39px;
  bottom: 20px;
  width: 195px;
  height: 97px;
  display: flex;
  gap: 7px;
  padding: 17px 0 0 6px;
  background: #1f2f57;
  color: #dcdde0;
  > svg { flex: none; width: 47px; height: 62px; }
`;
const BrandName = styled.div`
  display: flex;
  align-items: center;
  height: 38px;
  font: 500 28px/38px "Noto Sans CJK SC", sans-serif;
  white-space: nowrap;
  b { font: 500 36px/38px Roboto, sans-serif; margin-right: 1px; }
`;
const BrandUrl = styled.div`
  font: 27px/24px Roboto, sans-serif;
`;

const Cross = () => <svg viewBox="0 0 9 9"><path d="M1 1l7 7M8 1L1 8" /></svg>;
const UpArrow = ({ d }: { d?: string }) => <Arrow $dir={d} viewBox="0 0 8 6"><path d="M1 5l3-3.500L7 5" /></Arrow>;
const Fold = () => <svg viewBox="0 0 7 7"><path d="M1 3.500L3.500 1 6 3.500M1 6.500L3.500 4 6 6.500" /></svg>;

const tree: [number, string, string][] = [
  [0, 'server', '123'], [1, 'book', '平面图'], [2, 'bookB', 'Drawing1'], [1, 'book', '立面图'], [1, 'book', '剖面图'],
  [1, 'book', '三维图'], [1, 'book', '总图'], [1, 'book', '详图'], [1, 'bookB', '图纸说明'], [1, 'bookB', '图纸目录'],
];

function TreeBranch({ index, depth }: { index: number; depth: number }) {
  if (depth === 0) return null;
  if (depth === 2) return <Branch $w={24} viewBox="0 0 24 12"><path d="M5.500 0v12M17.500 0v6.500H24" /></Branch>;
  return (
    <Branch $w={12} viewBox="0 0 12 12">
      {index === 1
        ? <><path d="M5.500 10v2M9 6.500h3" /><path d="M2.500 3.500h6v6h-6zM4 6.500h3" stroke="#555" /></>
        : <path d={index === tree.length - 1 ? 'M5.500 0v6.500H12' : 'M5.500 0v12M5.500 6.500H12'} />}
    </Branch>
  );
}

function ProjectPalette() {
  return (
    <Palette>
      <PaletteBar>
        <svg viewBox="0 0 9 8"><path d="M1 1l6 6M7 1L1 7" strokeWidth="2" /></svg>
        <svg viewBox="0 0 9 8"><path d="M1 0v8M8 0v8M2 4h5M5 2v4" /><path d="M2 4l3-3v6z" fill="#111" /></svg>
        <svg viewBox="0 0 9 8"><path d="M0 1h9v6H0z" fill="#111" /><path d="M5 4h3M5 6h3" stroke="#ccc" /></svg>
        <PaletteName>工程管理</PaletteName>
        <PaletteId><svg viewBox="0 0 10 11"><path d="M0 0h10v10H0z" fill="#2f74d0" stroke="#1c4f9c" /><path d="M2 7l4-5v5z" stroke="#fff" /></svg></PaletteId>
      </PaletteBar>
      <PaletteMain>
        <PaletteCombo><Choice label="工程" text="123" /><Chev /></PaletteCombo>
        <PaletteBody>
          <PaletteSections>
            <SectionHead>图纸<Fold /></SectionHead>
            <SectionTools><Indent $w={1} /><Icon n="grid" s={12} /></SectionTools>
            <TreeBox>
              <Tree>
                {tree.map(([d, n, t], i) => (
                  <TreeRow key={t} $d={d}><TreeBranch index={i} depth={d} /><Icon n={n} s={12} />{t}</TreeRow>
                ))}
              </Tree>
            </TreeBox>
            <SectionHead>楼层<Fold /></SectionHead>
            <SectionTools><Tools list="folder sheetE | tower bldg brick nodes tower" /></SectionTools>
            <FloorArea>
              <Floors>
                <colgroup><col style={{ width: 12 }} /><col style={{ width: 20 }} /><col style={{ width: 19 }} /><col /></colgroup>
                <thead><tr><th /><th>层号</th><th>层高</th><th>文件</th></tr></thead>
                <tbody>
                  {['1', '2', '3'].map(n => <tr key={n}><td /><td>{n}</td><td>3000</td><td>Drawing1&lt;</td></tr>)}
                  <tr><td><svg viewBox="0 0 7 7"><path d="M2 0l4 3.500L2 7z" /></svg></td><td /><td /><td /></tr>
                  <tr><td /><td /><td /><td /></tr>
                  <tr><td><svg viewBox="0 0 7 7"><path d="M0 2h7L3.500 6z" /></svg></td><td /><td /><td /></tr>
                </tbody>
              </Floors>
            </FloorArea>
          </PaletteSections>
          <PaletteScroll><UpArrow /><Thumb $h={13} /><UpArrow d="down" /></PaletteScroll>
        </PaletteBody>
      </PaletteMain>
    </Palette>
  );
}

function Plan() {
  return (
    <Drawing>
      <defs>
        <pattern id="minor" x="13" y="4" width="11.530" height="11.530" patternUnits="userSpaceOnUse">
          <path d="M.5 0v12M0 .5h12" stroke="#121518" />
        </pattern>
        <pattern id="major" x="15" y="27" width="57.650" height="57.650" patternUnits="userSpaceOnUse">
          <path d="M.5 0v58M0 .5h58" stroke="#272a31" />
        </pattern>
      </defs>
      <rect width="100%" height="100%" fill="url(#minor)" />
      <rect width="100%" height="100%" fill="url(#major)" />
      <g transform="translate(-95 -96)">
        <path d="M310 203.500H761M310 303.500H761M310 414H761M347.500 96v356M447.500 96v356M568.500 96v356M724 96v356" stroke="#5c1014" />
        <path d="M346 96v75M724.500 98v314" stroke="#241519" strokeWidth="5" />
        <path d="M344 96v75M351 171V97h94.500v74M449 171V97h119v74M571.500 171V97H721v202.500h-40v7h40V413h7V96M663 202h17v4h-17M721 202h-4v4h4" stroke="#d4ced0" strokeWidth="1.600" />
        <path d="M447.500 98v72M570 98v72" stroke="#8c6669" strokeWidth="1.500" />
        <path d="M381 96.500h32M491 96.500h33M630 96.500h33" stroke="#12393c" strokeWidth="3" />
        <path d="M680 202c1-20 15-34 35-34v36h2v-36M678 303v33h-4l-11-4" stroke="#4f9e9b" strokeWidth="1.200" />
        <path d="M432 168h8M555 168h8" stroke="#999" />
        <path d="M105.500 484v14M110 499.500h23M103 496.500h6v6h-6zM140 491l9 9M149 491l-9 9" stroke="#ccc" />
      </g>
    </Drawing>
  );
}

function ViewCube() {
  return (
    <CubeBox>
      <svg viewBox="873 96 92 112" fill="none">
        <circle cx="916.500" cy="143.500" r="32.500" stroke="#3a3a3a" strokeWidth="5" />
        <path d="M902 129h29v29h-29z" fill="#d9dbdd" />
        <path d="M907 134h18v18h-18z" fill="#c0c8d0" />
        <path d="M912.500 121h8l-4 4zM912.500 168h8l-4-4zM894 139.500v8l4-4zM940 139.500v8l-4-4z" fill="#fff" />
        <path d="M876 105l4-4 4 4h-1v4h-6v-4zM951 184h7l-3 3z" fill="#555" />
        <path d="M942 103c5-2 8-1 11 1M955 108c4 4 4 7 3 12" stroke="#444" strokeWidth="3" />
        <rect x="901" y="195" width="31" height="11" rx="3" fill="#b4b6c8" />
        <path d="M924 199h4" stroke="#eee" />
        <g fill="#ccc" fontSize="11" textAnchor="middle">
          <text x="916.500" y="116">北</text>
          <text x="883.500" y="148">西</text>
          <text x="949.500" y="148">东</text>
          <text x="916.500" y="181">南</text>
        </g>
        <text x="916" y="150" fontSize="18" fill="#4a5058" textAnchor="middle">上</text>
        <text x="911" y="203" fontSize="7" fill="#555" textAnchor="middle" fontFamily="Open Sans">WCS</text>
      </svg>
    </CubeBox>
  );
}

function ElevationDialog() {
  return (
    <Frame>
      <Dialog onSubmit={e => e.preventDefault()}>
        <DialogTitle>立面生成设置<button type="button" aria-label="关闭"><Cross /></button></DialogTitle>
        <DialogTab type="button">基本</DialogTab>
        <DialogPanel>
          <Fieldset $w={269} $pt={6} $pb={10} $gap={10}>
            <legend>基本设置</legend>
            <OptionRow>
              <Option $w={130}><input type="radio" name="mode" defaultChecked />多层消隐(质量优化)</Option>
              <Option><input type="radio" name="mode" />单层消隐(速度优化)</Option>
            </OptionRow>
            <OptionRow><Option><input type="checkbox" />忽略栏杆以提高速度</Option></OptionRow>
          </Fieldset>
          <LowerRow>
            <Fieldset $w={95} $pt={3} $pb={8} $gap={8}>
              <legend>标注</legend>
              {['左侧标注', '右侧标注', '绘层间线'].map(t => (
                <OptionRow key={t}><Option><input type="checkbox" defaultChecked />{t}</Option></OptionRow>
              ))}
            </Fieldset>
            <Fields>
              <label htmlFor="diff">内外高差(m):</label><input id="diff" defaultValue="0.45" />
              <label htmlFor="ratio">出图比例:</label><input id="ratio" defaultValue="100" />
            </Fields>
          </LowerRow>
        </DialogPanel>
        <Submit>生成立面</Submit>
      </Dialog>
    </Frame>
  );
}

export default function App() {
  let icon = 0;
  return (
    <Page>
      <Global />
      <AppButton aria-label="AutoCAD">
        <svg viewBox="0 0 25 20">
          <path d="M2 17L8 1h4l6 16h-5l-1-4H8l-2 4z" fill="#c22a1c" />
          <path d="M8 1L2 17l5-4 3-7z" fill="#e4593c" />
          <path d="M10 1l8 16-6-4z" fill="#8c1710" />
          <path d="M20 10h4l-2 3z" fill="#333" />
        </svg>
      </AppButton>
      <TitleBar>
        <Title>Drawing1.dwg</Title>
        <WinButtons>
          <WinButton aria-label="最小化"><svg viewBox="0 0 9 9"><path d="M0 4.500h9" /></svg></WinButton>
          <WinButton aria-label="最大化"><svg viewBox="0 0 9 9"><path d="M1 .5h7v8H1zM1 2h7" /></svg></WinButton>
          <WinButton aria-label="关闭"><Cross /></WinButton>
        </WinButtons>
      </TitleBar>
      <MenuBar>
        {['文件(F)', '编辑(E)', '视图(V)', '插入(I)', '格式(O)', '工具(T)', '绘图(D)', '标注(N)', '修改(M)', '参数(P)', '窗口(W)', 'Acrobat 标记(C)', 'Adobe PDF(B)', '帮助(H)'].map(t => <MenuItem key={t}>{t}</MenuItem>)}
        <DocButtons>
          <DocButton aria-label="最小化文档"><svg viewBox="0 0 9 9"><path d="M1 7h7" /></svg></DocButton>
          <DocButton aria-label="还原文档"><svg viewBox="0 0 9 9"><path d="M3 1h5v5H3zM1 3h5v5H1z" strokeWidth="1.200" /></svg></DocButton>
          <DocButton aria-label="关闭文档"><Cross /></DocButton>
        </DocButtons>
      </MenuBar>
      <TabBar>
        <FileTab>Drawing1*<Cross /></FileTab>
        <NewTab aria-label="新建"><svg viewBox="0 0 18 13"><path d="M1 1h11c3 0 5 5 5 11H6C3 12 1 5 1 1z" /><path d="M9 4v6M6 7h6" stroke="#aaa" /></svg></NewTab>
      </TabBar>
      <ToolRow>
        <Band $w={29} $ml={5}><Tools list="pdf pdf2" /></Band>
        <Band $w={411}><Tools list="new open save | print preview plot pubs | cut copy paste match edit | undo down redo down | pan zoomrt zoomwin zoomprev | props center palette sheetset markup calc | help" /></Band>
        <Band $w={382}>
          <Indent $w={14}><Icon n="textstyle" /></Indent>
          <ComboBox $w={78}><Indent $w={9} /><Choice label="文字样式" text="Standard" /><Chev /></ComboBox>
          <Indent $w={4} /><Indent $w={14}><Icon n="dimstyle" /></Indent>
          <ComboBox $w={77}><Indent $w={9} /><Choice label="标注样式" text="STANDARD" /><Chev /></ComboBox>
          <Indent $w={4} /><Indent $w={14}><Icon n="tablestyle" /></Indent>
          <ComboBox $w={79}><Indent $w={2} /><Choice label="表格样式" text="Standard" /><Chev /></ComboBox>
          <Indent $w={4} /><Indent $w={14}><Icon n="leader" /></Indent>
          <ComboBox><Indent $w={10} /><Choice label="引线样式" text="Standard" /><Chev /></ComboBox>
        </Band>
      </ToolRow>
      <ToolRow>
        <Band $w={143} $ml={5}>
          <ComboBox $w={113}><Indent $w={2} /><Choice label="工作空间" text="AutoCAD 经典" /><Chev /></ComboBox>
          <Tools list="gear wsp" />
        </Band>
        <Band $w={254} $ml={6}>
          <Indent $w={15}><Icon n="layerprops" /></Indent>
          <ComboBox $w={192}>
            <Icon n="bulbY" s={10} /><Icon n="sun" s={10} /><Icon n="vpfreeze" s={10} /><Icon n="lock" s={10} /><Swatch />
            <Indent $w={1} /><Choice label="图层" text="0" /><Chev />
          </ComboBox>
          <Tools list="layB layBack layState" />
        </Band>
        <Band $w={371} $ml={6}>
          <MonoCombo $w={98}><Swatch /><Choice label="颜色" text="ByLayer" /><Chev /></MonoCombo>
          <Indent $w={2} />
          <MonoCombo $w={107}><LineSample $w={40} /><Choice label="线型" text="ByLayer" /><Chev /></MonoCombo>
          <Indent $w={2} />
          <MonoCombo $w={81}><LineSample $w={22} /><Choice label="线宽" text="ByLayer" /><Chev /></MonoCombo>
          <Indent $w={2} />
          <MonoCombo $off><Indent $w={2} /><Choice label="打印样式" text="ByColor" /><Chev /></MonoCombo>
        </Band>
        <Band $w={212} $ml={7}><Tools list="layB layDark | bulbB bulbS bulbY bulbL snow snow2 sun lockB lockS lockY layArrow layDown" /></Band>
      </ToolRow>
      <Body>
        <Side>
          <SideTitle>天正软...</SideTitle>
          <Clipped>轴网柱子</Clipped>
          <SideGroup $n={14}>
            {plain.map((t, i) => (
              <SideRow key={t}><SideButton><Tri $open={i === 13} /><Spread>{t.split(' ').map(w => <span key={w}>{w}</span>)}</Spread></SideButton></SideRow>
            ))}
          </SideGroup>
          {groups.map(g => (
            <React.Fragment key={g[0]}>
              <Rule />
              <SideGroup $n={g.length}>
                {g.map(t => <SideRow key={t}><SideButton><Icon n={`ty${++icon}`} s={12} />{t}</SideButton></SideRow>)}
              </SideGroup>
            </React.Fragment>
          ))}
        </Side>
        <Centre>
          <WorkRow>
            <DockColumn $w={22} $pr={5}>
              <Dock $h={289}><Tools list="line xline pline polygon rect arc circle cloud spline ellipse earc insblock mkblock point hatch gradient region table text addsel" /></Dock>
            </DockColumn>
            <Workspace>
              <View>
                <Canvas>
                  <Plan />
                  <ProjectPalette />
                  <ViewCube />
                  <ElevationDialog />
                  <Pointer viewBox="640 410 84 76">
                    <path d="M657 424l64 57" stroke="#d8161b" strokeWidth="2.500" />
                    <path d="M646 415l16 6-8 9z" fill="#e8161b" />
                  </Pointer>
                </Canvas>
                <VScroll><UpArrow /><Thumb $h={14} $low /><UpArrow d="down" /></VScroll>
              </View>
              <LayoutTabs>
                <NavButtons>
                  <NavButton aria-label="首页"><svg viewBox="0 0 7 8"><path d="M1 1v6M6 1L3 4l3 3z" /></svg></NavButton>
                  <NavButton aria-label="上一页"><svg viewBox="0 0 7 8"><path d="M5 1L2 4l3 3z" /></svg></NavButton>
                  <NavButton aria-label="下一页"><svg viewBox="0 0 7 8"><path d="M2 1l3 3-3 3z" /></svg></NavButton>
                  <NavButton aria-label="末页"><svg viewBox="0 0 7 8"><path d="M6 1v6M1 1l3 3-3 3z" /></svg></NavButton>
                </NavButtons>
                <LayoutTab $on>模型</LayoutTab><LayoutTab>布局1</LayoutTab><LayoutTab>布局2</LayoutTab>
                <HScroll><Grip /><svg viewBox="0 0 4 6"><path d="M3.500 .5L1 3l2.500 2.500" /></svg></HScroll>
              </LayoutTabs>
            </Workspace>
            <DockColumn $w={19} $pr={2}>
              <Dock $h={261}><Tools list="erase copy2 mirror offset array move rotate scale stretch trim extend breakpt brk join chamfer fillet blend explode" /></Dock>
              <Dock $h={89} $gap>
                <Tools list="order1 order2 order3 order4" />
                <DockRule />
                <Tools list="abc hatchback" />
              </Dock>
            </DockColumn>
          </WorkRow>
          <CommandRow>
            <CommandGrip><Dots /><Cross /></CommandGrip>
            <CommandMain>
              <CommandInput><Icon n="prompt" s={12} /><Icon n="down" s={8} /><input aria-label="命令" placeholder="键入命令" /></CommandInput>
            </CommandMain>
          </CommandRow>
        </Centre>
      </Body>
      <Status>
        <Coords $w={66}>比例 1:100▾</Coords>
        <Coords $w={103} $dark>11440, 4040 , 0</Coords>
        <StatusTools $w={215}>
          {'cursor snapg gridg* ortho* polar osnap* osnap3* angle ducs dyn lwt* transp* qp cycle plus'.split(' ').map(n => (
            <StatusTool key={n} $lit={n.endsWith('*')} aria-label={n.replace('*', '')}><Icon n={n.replace('*', '')} s={12} /></StatusTool>
          ))}
        </StatusTools>
        <Filler />
        <StatusText>模型</StatusText>
        <StatusTools $w={28}>{['model', 'layout'].map(n => <StatusTool key={n} aria-label={n}><Icon n={n} s={11} /></StatusTool>)}</StatusTools>
        <Filler $w={13} />
        <StatusTools $w={14}><StatusTool aria-label="注释"><Icon n="person" s={11} /></StatusTool></StatusTools>
        <StatusText $w={26}>1:1▾</StatusText>
        <StatusTools $w={28}>{['personY', 'personG'].map(n => <StatusTool key={n} aria-label={n}><Icon n={n} s={11} /></StatusTool>)}</StatusTools>
        <Filler $w={3} />
        <StatusTools $w={43}>{['gear', 'unlock', 'shield'].map(n => <StatusTool key={n} aria-label={n}><Icon n={n} s={11} /></StatusTool>)}</StatusTools>
        <StatusText $lit>编组</StatusText><StatusText>基线</StatusText><StatusText>填充</StatusText><StatusText $lit>加粗</StatusText><StatusText $w={43}>动态标注</StatusText>
        <Filler $w={3} />
        <StatusTools $w={43}>{['tray1', 'tray2', 'bulbY'].map(n => <StatusTool key={n} aria-label={n}><Icon n={n} s={11} /></StatusTool>)}</StatusTools>
        <StatusTools $w={24}>{['down', 'clean'].map(n => <StatusTool key={n} aria-label={n}><Icon n={n} s={10} /></StatusTool>)}</StatusTools>
        <Filler $w={9} />
      </Status>
      <Brand>
        <svg viewBox="0 0 47 62" aria-hidden="true">
          <path d="M4 7l5 3 4-2 3 3 5 5-6 2-3 2c-2 5-2 9 6 12 7 1 12 1 17 3 5 3 6 7 5 12v12h-4l-1-9-6-7c-5 2-10 2-14 1l-2 6-2 9H7l1-16c-4-4-7-8-7-14 0-5 4-8 6-13z" fill="#dcdde0" />
          <path d="M12 9l1-8M13 9l5-8M11 6L9 2M15 9l8-6M19 6l-1-3M17 9c7 3 13 3 19 0l9-7M24 10l5-6M31 10l3-5M37 8l3-3" stroke="#dcdde0" strokeWidth="1.500" fill="none" />
        </svg>
        <div>
          <BrandName><b>3D</b>溜溜网</BrandName>
          <BrandUrl>3D66.COM</BrandUrl>
        </div>
      </Brand>
    </Page>
  );
}
